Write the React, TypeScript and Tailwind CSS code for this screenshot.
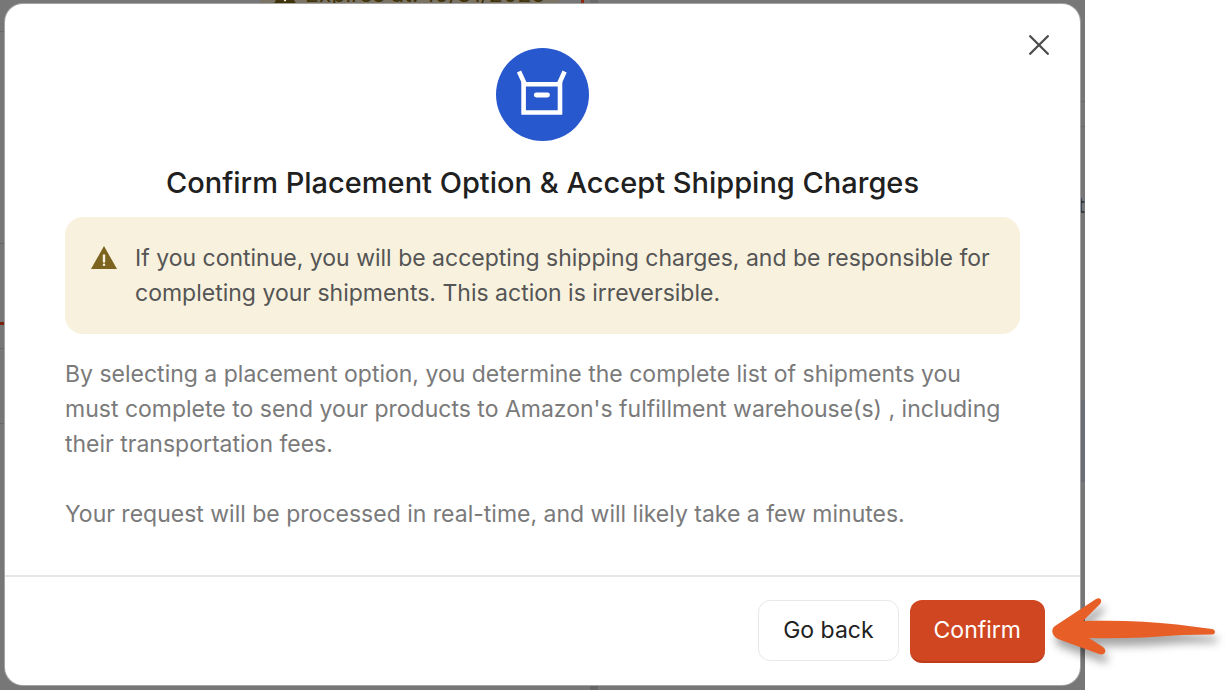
import type { ReactNode } from 'react';

function BoxIcon() {
    return (
        <div className="size-[93px] rounded-full bg-[#2858cd]">
            <svg viewBox="0 0 93 93" className="size-full" fill="none" stroke="#fff" aria-hidden="true">
                <path d="M27.600 36.300h36.400v28.200H27.600z" strokeWidth="4.600" />
                <path d="M28.500 35.500 23 23.500M63.200 35.500 68.600 23.500" strokeWidth="4.600" />
                <path d="M40.300 47h11.200" strokeWidth="4.800" strokeLinecap="round" />
            </svg>
        </div>
    );
}

function WarningIcon({ className }: { className: string }) {
    return (
        <svg viewBox="0 0 26 23" className={className} aria-hidden="true">
            <path d="M13 0 26 23H0z" fill="currentColor" />
            <path d="M13 9.500v6" stroke="#f8f1de" strokeWidth="2.400" strokeLinecap="round" />
            <circle cx="13" cy="18.700" r="1.300" fill="#f8f1de" />
        </svg>
    );
}

function PointerArrow() {
    return (
        <svg
            viewBox="0 0 174 74"
            className="pointer-events-none absolute -top-1.5 left-full h-[74px] w-[174px] drop-shadow-[3px_8px_4px_rgba(0,0,0,0.35)]"
            aria-hidden="true"
        >
            <path
                d="M10 32 51 5c4-2.500 7 1.500 4 5L38 27c34-1 65 0 94 3.500l35 4.500c4 1 4 5 0 5.500l-30 .5c-32 2.500-64 4-93 3l14 9c5 4 1 9-4 7L13 45C6 41 6 35 10 32Z"
                fill="#e75e26"
            />
        </svg>
    );
}

/* The dimmed page, which shows only round the edge of the dialog. */
function DimmedPage() {
    return (
        <div className="absolute inset-0 flex justify-between overflow-hidden bg-[#777]" aria-hidden="true">
            <div className="flex w-2 flex-col">
                <div className="mt-[31px] h-px bg-[#686868]" />
                <div className="mt-[211px] h-px bg-[#686868]" />
                <div className="mt-[78px] h-[3px] bg-[#7a210e]" />
                <div className="mt-[23px] h-px bg-[#686868]" />
                <div className="mt-[74px] h-px bg-[#686868]" />
            </div>
            <div className="flex flex-1 flex-col justify-between pl-[253px]">
                <div className="-mt-6 flex h-9 items-end">
                    <div className="mr-[22px] flex h-full w-[298px] items-center gap-2 bg-[#7b7464] pl-3 text-[23px] text-[#40330b]">
                        <WarningIcon className="h-5 w-6" />
                        Expires at: 10/31/2025
                    </div>
                    <div className="mr-[6px] h-full w-[3px] bg-[#8e2914]" />
                    <div className="h-full w-2 bg-[#6a6a6a]" />
                </div>
                <div className="flex h-1.5 pl-[153px]">
                    <div className="mr-[174px] size-0.5 bg-[#222]" />
                    <div className="w-2 bg-[#666]" />
                </div>
            </div>
            <div className="flex w-2 flex-col items-end">
                <div className="mt-[101px] h-px w-full bg-[#686868]" />
                <div className="mt-[24px] h-px w-full bg-[#686868]" />
                <div className="mt-[60px] h-9 text-[22px] leading-9 text-[#333]">t</div>
                <div className="mt-[177px] h-[82px] w-full bg-[#6a6d76]" />
            </div>
        </div>
    );
}

function Alert({ children }: { children: ReactNode }) {
    return (
        <div role="alert" className="flex w-full gap-[18px] rounded-[18px] bg-[#f8f1de] pt-6 pr-5 pb-[23px] pl-[26px] text-[#555]">
            <WarningIcon className="mt-[5px] h-[23px] w-[26px] shrink-0 text-[#7c6420]" />
            <p>{children}</p>
        </div>
    );
}

export default function App() {
    return (
        <main className="bg-white pr-[143px] font-['Inter','Liberation_Sans',sans-serif]">
            <div className="relative p-[5px] pt-1">
                <DimmedPage />
                <div
                    role="dialog"
                    aria-modal="true"
                    aria-labelledby="dialog-title"
                    className="relative rounded-[18px] bg-white shadow-[0_0_0_1px_#a3a3a3]"
                >
                    <button type="button" aria-label="Close" className="absolute top-[30px] right-[30px] p-px">
                        <svg viewBox="0 0 20 20" className="size-5" stroke="#4d4d4d" strokeWidth="2.300" strokeLinecap="round" aria-hidden="true">
                            <path d="M1.200 1.200 18.800 18.800M18.800 1.200 1.200 18.800" />
                        </svg>
                    </button>

                    <div className="flex flex-col items-center px-[60px] pt-11 pb-[43px] text-[23px] leading-[35px]">
                        <BoxIcon />
                        <h1 id="dialog-title" className="mt-6 mb-4 text-center text-[29px] leading-9 font-medium text-[#202020]">
                            Confirm Placement Option &amp; Accept Shipping Charges
                        </h1>
                        <Alert>
                            If you continue, you will be accepting shipping charges, and be responsible for completing your
                            shipments. This action is irreversible.
                        </Alert>
                        <div className="mt-[23px] w-full space-y-[35px] text-[#7a7a7a]">
                            <p>
                                By selecting a placement option, you determine the complete list of shipments you must
                                complete to send your products to Amazon's fulfillment warehouse(s) , including their
                                transportation fees.
                            </p>
                            <p>Your request will be processed in real-time, and will likely take a few minutes.</p>
                        </div>
                    </div>

                    <div className="flex items-start justify-end gap-[11px] border-t-2 border-[#e7e7e7] px-[35px] pt-[23px] pb-[22px] text-[23px]">
                        <button type="button" className="h-[61px] rounded-xl border border-[#e8e8e8] px-6 text-[#222]">
                            Go back
                        </button>
                        <div className="relative">
                            <button type="button" className="h-[63px] rounded-xl border-b-2 border-[#bd3c1b] bg-[#d04620] px-6 text-white">
                                Confirm
                            </button>
                            <PointerArrow />
                        </div>
                    </div>
                </div>
            </div>
        </main>
    );
}
